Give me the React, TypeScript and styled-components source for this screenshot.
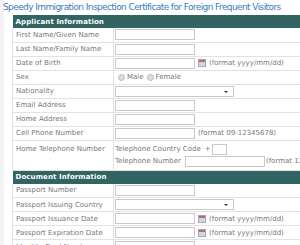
import styled, { createGlobalStyle } from "styled-components";

const GlobalStyle = createGlobalStyle`
  html, body {
    margin: 0;
    padding: 0;
    background: #fff;
    overflow: hidden;
  }
  body {
    font-family: "DejaVu Sans", Verdana, sans-serif;
  }
`;

const Page = styled.div`
  width: 300px;
  height: 245px;
  overflow: hidden;
  background: linear-gradient(to right, #f3f3f3 0, #f3f3f3 4px, #fff 4px);
`;

const Title = styled.h1`
  margin: 0;
  padding: 2px 0 0 3px;
  height: 13px;
  font-size: 9px;
  line-height: 11px;
  font-weight: normal;
  letter-spacing: -0.6px;
  color: #3b7bbd;
  white-space: nowrap;
`;

const Form = styled.table`
  margin-left: 12px;
  width: 420px;
  border-collapse: collapse;
  table-layout: fixed;
  font-size: 7px;
  color: #777;
`;

const LabelCol = styled.col`
  width: 101px;
`;

const Header = styled.th`
  background: #316462;
  color: #fff;
  font-weight: bold;
  text-align: left;
  height: 13px;
  padding: 0 0 0 3px;
  font-size: 7px;
  letter-spacing: 0.1px;
`;

const Row = styled.tr<{ $tall?: boolean }>`
  height: ${(p) => (p.$tall ? "30px" : "14px")};
  border-bottom: 1px solid #e2e2e2;
`;

const Label = styled.td`
  padding: 0 0 0 3px;
  border-left: 1px solid #e2e2e2;
  border-right: 1px solid #e2e2e2;
  vertical-align: middle;
  white-space: nowrap;
  overflow: hidden;
`;

const LabelTop = styled(Label)`
  vertical-align: top;
  padding-top: 4px;
`;

const Value = styled.td`
  padding: 0 0 0 1px;
  vertical-align: middle;
  white-space: nowrap;
`;

const Line = styled.div`
  display: flex;
  align-items: center;
  height: 12px;
`;

const TextBox = styled.div<{ $w?: number; $gap?: number }>`
  width: ${(p) => p.$w ?? 78}px;
  margin-left: ${(p) => p.$gap ?? 0}px;
  height: 9px;
  border: 1px solid #c8c8c8;
  background: #fff;
  flex: none;
`;

const Select = styled.div`
  width: 117px;
  height: 9px;
  border: 1px solid #c8c8c8;
  background: #fff;
  position: relative;
  &::after {
    content: "";
    position: absolute;
    right: 5px;
    top: 4px;
    border-left: 2px solid transparent;
    border-right: 2px solid transparent;
    border-top: 2px solid #333;
  }
`;

const Hint = styled.span<{ $gap?: number }>`
  margin-left: ${(p) => p.$gap ?? 3}px;
  color: #777;
`;

const Cal = styled.span`
  display: inline-block;
  flex: none;
  width: 6px;
  height: 6px;
  margin-left: 3px;
  background: linear-gradient(#c66 0, #c66 2px, #cfd7e4 2px);
  border: 1px solid #9aa9bf;
`;

const Radio = styled.span`
  display: inline-block;
  flex: none;
  width: 5px;
  height: 5px;
  border-radius: 50%;
  background: #ddd;
  border: 1px solid #bbb;
  margin: 0 2px 0 3px;
`;

const Caption = styled.span`
  color: #777;
`;

const Plus = styled.span`
  color: #777;
  margin: 0 1px 0 4px;
`;

const simple = [
  ["First Name/Given Name", "text"],
  ["Last Name/Family Name", "text"],
  ["Date of Birth", "date"],
  ["Sex", "sex"],
  ["Nationality", "select"],
  ["Email Address", "text"],
  ["Home Address", "text"],
  ["Cell Phone Number", "phone"],
];

const docs = [
  ["Passport Number", "text"],
  ["Passport Issuing Country", "select"],
  ["Passport Issuance Date", "date"],
  ["Passport Expiration Date", "date"],
  ["Identity Card Number", "text"],
];

const Field = ({ kind }: { kind: string }) => {
  if (kind === "select") return <Line><Select /></Line>;
  if (kind === "sex")
    return (
      <Line>
        <Radio /><Caption>Male</Caption>
        <Radio /><Caption>Female</Caption>
      </Line>
    );
  if (kind === "date")
    return (
      <Line>
        <TextBox /><Cal /><Hint>(format yyyy/mm/dd)</Hint>
      </Line>
    );
  if (kind === "phone")
    return (
      <Line>
        <TextBox /><Hint>(format 09-12345678)</Hint>
      </Line>
    );
  return <Line><TextBox /></Line>;
};

export default function App() {
  return (
    <Page>
      <GlobalStyle />
      <Title>Speedy Immigration Inspection Certificate for Foreign Frequent Visitors</Title>
      <Form>
        <colgroup>
          <LabelCol />
          <col />
        </colgroup>
        <tbody>
          <tr>
            <Header colSpan={2}>Applicant Information</Header>
          </tr>
          {simple.map(([label, kind]) => (
            <Row key={label}>
              <Label>{label}</Label>
              <Value><Field kind={kind} /></Value>
            </Row>
          ))}
          <Row $tall>
            <LabelTop>Home Telephone Number</LabelTop>
            <Value>
              <Line>
                <Caption>Telephone Country Code</Caption>
                <Plus>+</Plus>
                <TextBox $w={13} />
              </Line>
              <Line>
                <Caption>Telephone Number</Caption>
                <TextBox $w={78} $gap={4} />
                <Hint $gap={1}>(format 12345678)</Hint>
              </Line>
            </Value>
          </Row>
          <tr>
            <Header colSpan={2}>Document Information</Header>
          </tr>
          {docs.map(([label, kind]) => (
            <Row key={label}>
              <Label>{label}</Label>
              <Value><Field kind={kind} /></Value>
            </Row>
          ))}
        </tbody>
      </Form>
    </Page>
  );
}
